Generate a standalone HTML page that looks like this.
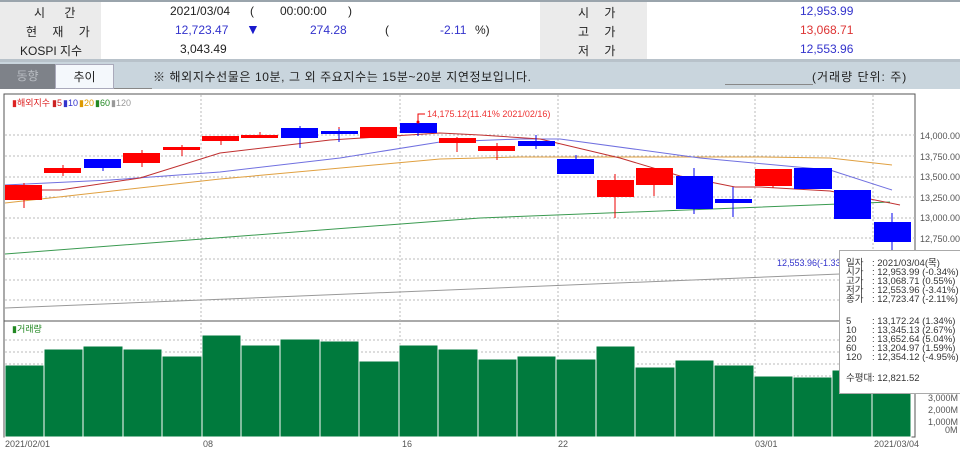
<!DOCTYPE html>
<html><head><meta charset="utf-8"><style>
*{margin:0;padding:0;box-sizing:border-box}
body{width:960px;height:450px;overflow:hidden;background:#fff;font-family:"Liberation Sans","Noto Sans CJK KR",sans-serif;font-size:12px;color:#222;position:relative}
.a{position:absolute;white-space:nowrap}
</style></head><body>
<div class="a" style="left:0;top:0;width:960px;height:2px;background:#9aa4ac"></div>
<div class="a" style="left:0;top:2px;width:101px;height:58px;background:#ebebeb"></div>
<div class="a" style="left:540px;top:2px;width:107px;height:58px;background:#ebebeb"></div>
<div class="a" style="left:0;top:59px;width:960px;height:3px;background:#b8c2ca"></div>
<div class="a" style="left:34px;top:4px;letter-spacing:8px">시 간</div>
<div class="a" style="left:26px;top:23px;letter-spacing:6px">현 재 가</div>
<div class="a" style="left:20px;top:42px">KOSPI 지수</div>
<div class="a" style="left:170px;top:4px">2021/03/04</div>
<div class="a" style="left:250px;top:4px">(</div>
<div class="a" style="left:280px;top:4px">00:00:00</div>
<div class="a" style="left:348px;top:4px">)</div>
<div class="a" style="left:175px;top:23px;color:#3333cc">12,723.47</div>
<div class="a" style="left:246px;top:21px;color:#1a1acc;font-size:14px">▼</div>
<div class="a" style="left:310px;top:23px;color:#3333cc">274.28</div>
<div class="a" style="left:385px;top:23px">(</div>
<div class="a" style="left:440px;top:23px;color:#3333cc">-2.11</div>
<div class="a" style="left:475px;top:23px">%)</div>
<div class="a" style="left:180px;top:42px">3,043.49</div>
<div class="a" style="left:578px;top:4px;letter-spacing:6px">시 가</div>
<div class="a" style="left:578px;top:23px;letter-spacing:6px">고 가</div>
<div class="a" style="left:578px;top:42px;letter-spacing:6px">저 가</div>
<div class="a" style="left:800px;top:4px;color:#3333cc">12,953.99</div>
<div class="a" style="left:800px;top:23px;color:#dd3333">13,068.71</div>
<div class="a" style="left:800px;top:42px;color:#3333cc">12,553.96</div>
<div class="a" style="left:0;top:62px;width:960px;height:27px;background:#c9d5dd"></div>
<div class="a" style="left:0;top:64px;width:55px;height:25px;background:#7e8289;color:#b8bcc2;text-align:center;line-height:24px">동향</div>
<div class="a" style="left:55px;top:64px;width:59px;height:25px;background:#f4f8fc;border:1px solid #aab;text-align:center;line-height:24px">추이</div>
<div class="a" style="left:114px;top:88px;width:38px;height:1px;background:#888"></div>
<div class="a" style="left:153px;top:68px;letter-spacing:0.6px">※ 해외지수선물은 10분, 그 외 주요지수는 15분~20분 지연정보입니다.</div>
<div class="a" style="left:812px;top:68px;letter-spacing:1px">(거래량 단위: 주)</div>
<div class="a" style="left:725px;top:84px;width:88px;height:1px;background:#888"></div>
<svg class="a" style="left:0;top:0" width="960" height="450" font-family="Liberation Sans, Noto Sans CJK KR, sans-serif">
<rect x="4" y="94" width="911" height="343" fill="#fff" stroke="#555" stroke-width="1"/>
<line x1="4" y1="321" x2="915" y2="321" stroke="#555"/>
<g stroke="#bbb" stroke-dasharray="2,2" stroke-width="1">
<line x1="5" y1="135" x2="915" y2="135"/><line x1="5" y1="156" x2="915" y2="156"/><line x1="5" y1="177" x2="915" y2="177"/><line x1="5" y1="197" x2="915" y2="197"/><line x1="5" y1="218" x2="915" y2="218"/><line x1="5" y1="238" x2="915" y2="238"/><line x1="5" y1="259" x2="915" y2="259"/><line x1="5" y1="280" x2="915" y2="280"/><line x1="5" y1="300" x2="915" y2="300"/>
<line x1="5" y1="340" x2="915" y2="340"/><line x1="5" y1="352" x2="915" y2="352"/><line x1="5" y1="364" x2="915" y2="364"/><line x1="5" y1="376" x2="915" y2="376"/><line x1="5" y1="388" x2="915" y2="388"/>
<line x1="201" y1="95" x2="201" y2="436"/><line x1="400" y1="95" x2="400" y2="436"/><line x1="558" y1="95" x2="558" y2="436"/><line x1="755" y1="95" x2="755" y2="436"/><line x1="873" y1="95" x2="873" y2="436"/>
</g>
<text x="12" y="106" font-size="9" fill="#d22">▮해외지수</text><text x="52" y="106" font-size="9" fill="#c22">▮5</text><text x="63" y="106" font-size="9" fill="#33c">▮10</text><text x="79" y="106" font-size="9" fill="#d90">▮20</text><text x="95" y="106" font-size="9" fill="#282">▮60</text><text x="111" y="106" font-size="9" fill="#999">▮120</text>
<polyline fill="none" stroke="#999" stroke-width="1" points="5,308 840,274"/>
<polyline fill="none" stroke="#3a9a50" stroke-width="1" points="5,254 480,218 890,202"/>
<polyline fill="none" stroke="#e0a040" stroke-width="1" points="5,203 220,179 440,159 520,157 600,157 760,157 830,158 892,165"/>
<polyline fill="none" stroke="#7070e0" stroke-width="1" points="5,185 110,180 220,172 340,158 440,142 520,139 560,139 700,158 830,170 892,190"/>
<polyline fill="none" stroke="#c03030" stroke-width="1" points="5,190 60,190 140,178 220,153 330,140 440,133 480,135 540,139 620,158 680,176 735,187 760,187 830,191 900,205"/>
<g stroke-width="1">
<path stroke="#e00" d="M24 183V208M63 165V176M142 150V167M182 145V156M221 136V145M260 132V138M339 127V141M457 137V152M497 143V160M615 174V218M654 168V196M773 169V188"/>
<path stroke="#00e" d="M103 159V171M300 126V148M339 129V142M418 117V136M536 135V149M576 155V174M694 168V214M733 187V217M813 168V189M852 190V219M892 213V258"/>
</g>
<g fill="#f00">
<rect x="5" y="185" width="37" height="15"/><rect x="44" y="168" width="37" height="5"/><rect x="123" y="153" width="37" height="10"/><rect x="163" y="147" width="37" height="3"/><rect x="202" y="136" width="37" height="5"/><rect x="241" y="135" width="37" height="3"/><rect x="360" y="127" width="37" height="11"/><rect x="439" y="138" width="37" height="5"/><rect x="478" y="146" width="37" height="5"/><rect x="597" y="180" width="37" height="17"/><rect x="636" y="168" width="37" height="17"/><rect x="755" y="169" width="37" height="17"/>
</g>
<g fill="#00f">
<rect x="84" y="159" width="37" height="9"/><rect x="281" y="128" width="37" height="10"/><rect x="321" y="131" width="37" height="3"/><rect x="400" y="123" width="37" height="10"/><rect x="518" y="141" width="37" height="5"/><rect x="557" y="159" width="37" height="15"/><rect x="676" y="176" width="37" height="33"/><rect x="715" y="199" width="37" height="4"/><rect x="794" y="168" width="38" height="21"/><rect x="834" y="190" width="37" height="29"/><rect x="874" y="222" width="37" height="20"/>
</g>
<path d="M418 122V114H425" stroke="#e00" fill="none"/><circle cx="418" cy="122" r="1.5" fill="#e00"/>
<text x="427" y="117" font-size="9" fill="#e33">14,175.12(11.41% 2021/02/16)</text>
<text x="777" y="266" font-size="9" fill="#33c">12,553.96(-1.33%</text>
<g fill="#555" font-size="9">
<text x="920" y="139">14,000.00</text><text x="920" y="160">13,750.00</text><text x="920" y="180">13,500.00</text><text x="920" y="201">13,250.00</text><text x="920" y="221">13,000.00</text><text x="920" y="242">12,750.00</text>
<text x="928" y="401">3,000M</text><text x="928" y="413">2,000M</text><text x="928" y="425">1,000M</text><text x="945" y="433">0M</text>
<text x="5" y="447">2021/02/01</text><text x="203" y="447">08</text><text x="402" y="447">16</text><text x="558" y="447">22</text><text x="755" y="447">03/01</text><text x="874" y="447">2021/03/04</text>
</g>
<text x="12" y="332" font-size="9" fill="#282">▮거래량</text>
<g fill="#007a3d" stroke="#fff" stroke-width="1">
<rect x="5" y="365" width="39" height="72"/><rect x="44" y="349" width="39" height="88"/><rect x="83" y="346" width="40" height="91"/><rect x="123" y="349" width="39" height="88"/><rect x="162" y="356" width="40" height="81"/><rect x="202" y="335" width="39" height="102"/><rect x="241" y="345" width="39" height="92"/><rect x="280" y="339" width="40" height="98"/><rect x="320" y="341" width="39" height="96"/><rect x="359" y="361" width="40" height="76"/><rect x="399" y="345" width="39" height="92"/><rect x="438" y="349" width="40" height="88"/><rect x="478" y="359" width="39" height="78"/><rect x="517" y="356" width="39" height="81"/><rect x="556" y="359" width="40" height="78"/><rect x="596" y="346" width="39" height="91"/><rect x="635" y="367" width="40" height="70"/><rect x="675" y="360" width="39" height="77"/><rect x="714" y="365" width="40" height="72"/><rect x="754" y="376" width="39" height="61"/><rect x="793" y="377" width="39" height="60"/><rect x="832" y="370" width="40" height="67"/><rect x="872" y="372" width="39" height="65"/>
</g>
<rect x="839.5" y="250.5" width="125" height="143" fill="#fff" stroke="#aaa"/>
<g font-size="9.5" fill="#333">
<text x="846" y="266">일자</text><text x="872" y="266">: 2021/03/04(목)</text>
<text x="846" y="275">시가</text><text x="872" y="275">: 12,953.99 (-0.34%)</text>
<text x="846" y="284">고가</text><text x="872" y="284">: 13,068.71 (0.55%)</text>
<text x="846" y="293">저가</text><text x="872" y="293">: 12,553.96 (-3.41%)</text>
<text x="846" y="302">종가</text><text x="872" y="302">: 12,723.47 (-2.11%)</text>
<text x="846" y="324">5</text><text x="872" y="324">: 13,172.24 (1.34%)</text>
<text x="846" y="333">10</text><text x="872" y="333">: 13,345.13 (2.67%)</text>
<text x="846" y="342">20</text><text x="872" y="342">: 13,652.64 (5.04%)</text>
<text x="846" y="351">60</text><text x="872" y="351">: 13,204.97 (1.59%)</text>
<text x="846" y="360">120</text><text x="872" y="360">: 12,354.12 (-4.95%)</text>
<text x="846" y="381">수평대</text><text x="872" y="381">: 12,821.52</text>
</g>
</svg>
</body></html>
